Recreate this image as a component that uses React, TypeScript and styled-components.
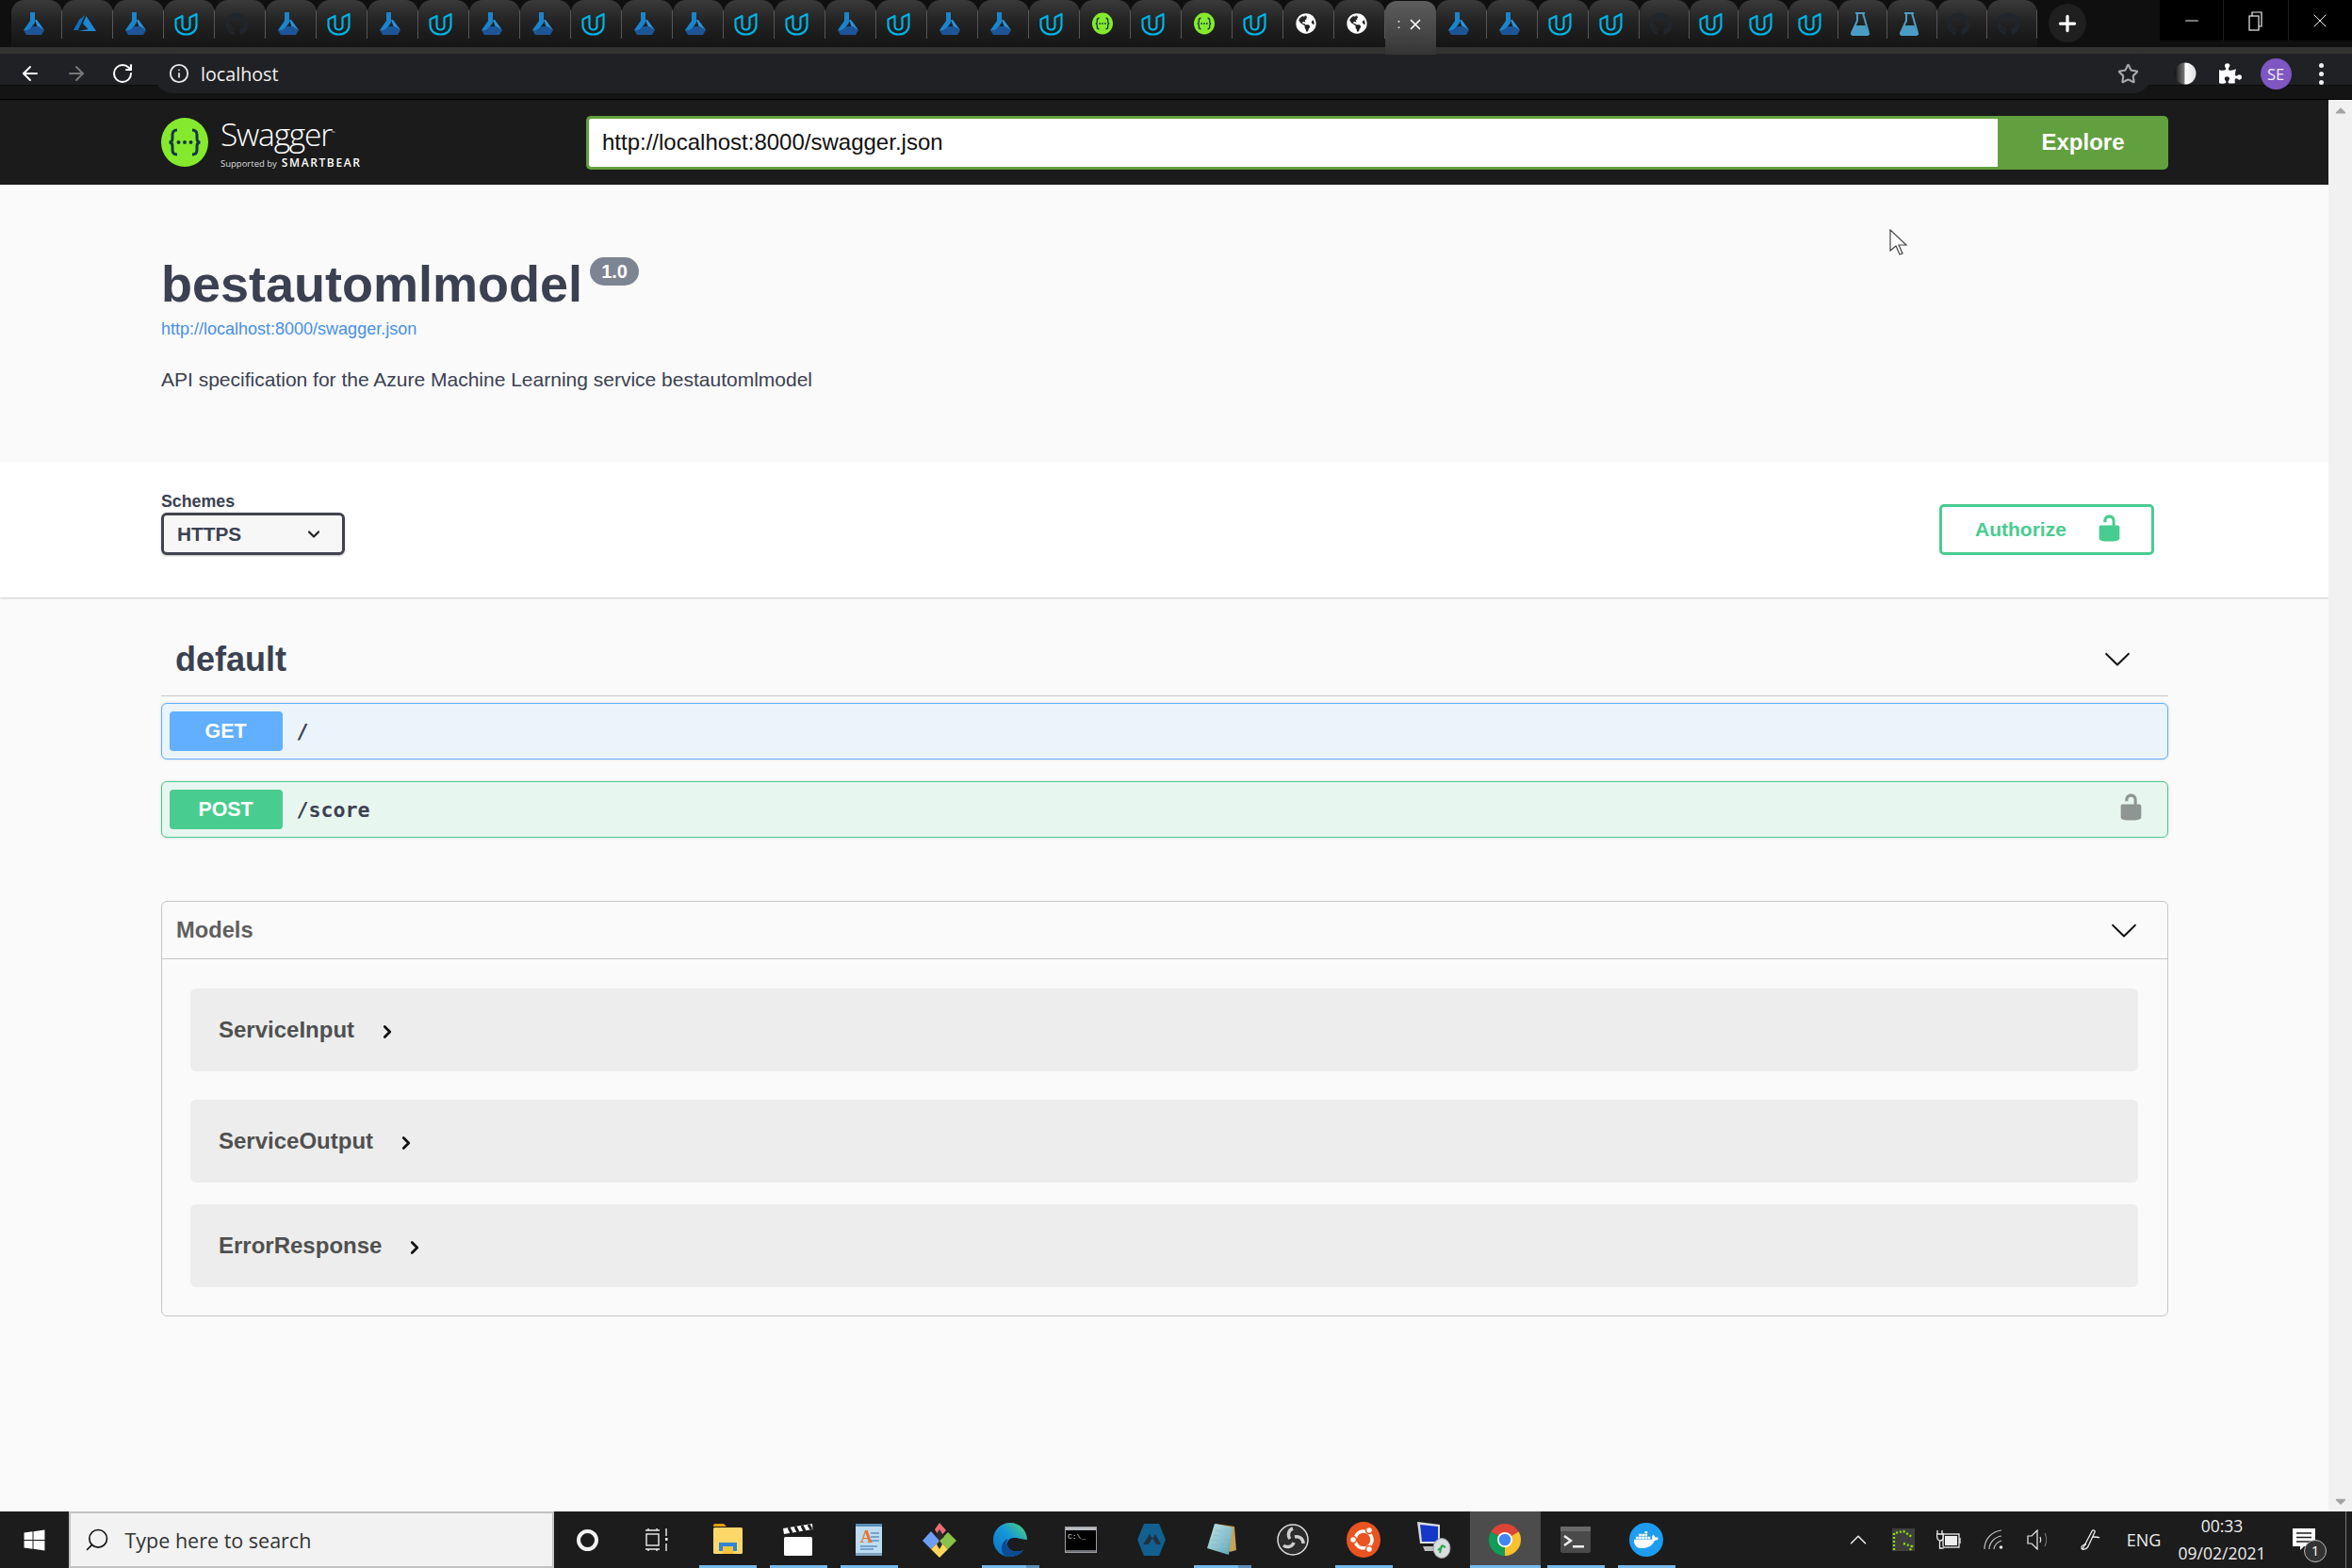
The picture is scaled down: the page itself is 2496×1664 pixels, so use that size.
import React from 'react';
import styled, { createGlobalStyle } from 'styled-components';
import { ArrowLeft, ArrowRight, RotateCw, Info, Star, Search, ChevronDown, ChevronRight, Plus, Minus, X, ChevronUp } from 'lucide-react';
import { FaGithub, FaGlobeAmericas, FaWindows, FaPuzzlePiece, FaDocker, FaCaretUp, FaCaretDown } from 'react-icons/fa';

const GlobalStyle = createGlobalStyle`
  html, body {
    margin: 0;
    padding: 0;
    overflow: hidden;
    background: #fafafa;
    font-family: "Liberation Sans", Arial, sans-serif;
  }
`;

const Screen = styled.div`
  position: relative;
  width: 2496px;
  height: 1664px;
  display: flex;
  flex-direction: column;
  overflow: hidden;
`;

/* ---- browser tabs ---- */
const TabStrip = styled.div`
  height: 50px;
  flex: none;
  display: flex;
  padding-left: 12px;
  background: #0f0f0f;
`;

const Tab = styled.div<{ $narrow?: boolean }>`
  position: relative;
  width: ${(p) => (p.$narrow ? '52.7px' : '54px')};
  flex: none;
  box-sizing: border-box;
  padding-right: 7px;
  display: flex;
  align-items: center;
  justify-content: center;
  border-radius: 14px 14px 0 0;
  background: linear-gradient(#3a3a3a, #232323 45%, #141414);
  &::after {
    content: '';
    position: absolute;
    right: 0;
    top: 11px;
    bottom: 9px;
    width: 1px;
    background: #565656;
  }
`;

const ActiveTab = styled.div`
  width: 54px;
  height: 57px;
  margin-top: 1px;
  flex: none;
  display: flex;
  align-items: flex-start;
  justify-content: center;
  gap: 7px;
  padding-top: 14px;
  box-sizing: border-box;
  border-radius: 12px 12px 0 0;
  background: linear-gradient(#5d5d5d, #3c3c3c 85%, #333);
  color: #fff;
  font-size: 14px;
  line-height: 20px;
  z-index: 1;
  svg {
    margin-top: 2px;
  }
`;

const NewTab = styled.div`
  width: 40px;
  height: 41px;
  margin: 4px 0 0 12px;
  flex: none;
  display: flex;
  align-items: center;
  justify-content: center;
  border-radius: 50%;
  background: #1f1f1f;
  color: #fff;
`;

const WindowControls = styled.div`
  margin-left: auto;
  width: 204px;
  height: 43px;
  display: flex;
  background: #000;
  color: #eee;
`;

const WindowButton = styled.div`
  flex: 1;
  display: flex;
  align-items: center;
  justify-content: center;
  & + & {
    border-left: 1px solid #1c1c1c;
  }
`;

const RestoreIcon = () => (
  <svg width="16" height="22" viewBox="0 0 16 22" fill="none" stroke="#eee" strokeWidth="1.2">
    <rect x="1" y="6" width="10" height="15" />
    <path d="M4 6V2h10v15h-3" />
  </svg>
);

const LabIcon = () => (
  <svg width="22" height="24" viewBox="0 0 22 24">
    <polygon points="7,0 12,0 12,11 4,22 0,19 7,9" fill="#1a84cc" />
    <polygon points="12,8 14,8 22,19 15,16" fill="#2c93dc" />
    <polygon points="10,15 16,15 22,19 19,24 3,24 0,19 4,19" fill="#1d5597" />
  </svg>
);

const AzureIcon = () => (
  <svg width="24" height="20" viewBox="0 0 24 20">
    <polygon points="12,1 6,6 0,17 5,17" fill="#0f6fbf" />
    <polygon points="13.5,2 10,10 15.5,16 5,18 24,18" fill="#1d86d6" />
  </svg>
);

const UdacityIcon = () => (
  <svg width="25" height="25" viewBox="0 0 25 25" fill="none" stroke="#02b3e4" strokeWidth="2.2" strokeLinejoin="round">
    <path d="M1.5 7.5 8.5 4v10.5c0 2.4 1.8 4 4 4 2.600 0 4-1.700 4-4V5.500L23.500 2v12c0 5.500-4.500 9.500-11 9.500s-11-4-11-9.500z" />
  </svg>
);

const FlaskIcon = () => (
  <svg width="22" height="25" viewBox="0 0 22 25">
    <path d="M6 1h10M8 1v8L2 22a1.500 1.500 0 0 0 1.500 2h15a1.500 1.500 0 0 0 1.500-2L14 1" fill="none" stroke="#4b9cc5" strokeWidth="2" />
    <path d="M5.500 14h11l4 10h-19z" fill="#4b9cc5" />
  </svg>
);

const SwaggerMark = ({ width, height }: { width: number; height: number }) => (
  <svg width={width} height={height} viewBox="0 0 50 52">
    <ellipse cx="25" cy="26" rx="25" ry="26" fill="#85ea2d" />
    <g fill="none" stroke="#173647" strokeWidth="3">
      <path d="M17 13c-4 0-5 2-5 5v4c0 2.500-1 4-3.500 4 2.500 0 3.500 1.500 3.500 4v4c0 3 1 5 5 5" />
      <path d="M33 13c4 0 5 2 5 5v4c0 2.500 1 4 3.500 4-2.500 0-3.500 1.500-3.500 4v4c0 3-1 5-5 5" />
    </g>
    <g fill="#173647">
      <circle cx="18.500" cy="26" r="2" />
      <circle cx="25" cy="26" r="2" />
      <circle cx="31.500" cy="26" r="2" />
    </g>
  </svg>
);

type TabKind = 'lab' | 'azure' | 'udacity' | 'github' | 'swagger' | 'globe' | 'flask';

const tabIcon = (kind: TabKind) => {
  switch (kind) {
    case 'lab':
      return <LabIcon />;
    case 'azure':
      return <AzureIcon />;
    case 'udacity':
      return <UdacityIcon />;
    case 'github':
      return <FaGithub size={25} color="#20262c" />;
    case 'swagger':
      return <SwaggerMark width={22} height={24} />;
    case 'globe':
      return <FaGlobeAmericas size={22} color="#fff" />;
    default:
      return <FlaskIcon />;
  }
};

const tabsBefore: TabKind[] = [
  'lab', 'azure', 'lab', 'udacity', 'github', 'lab', 'udacity', 'lab', 'udacity', 'lab', 'lab', 'udacity', 'lab', 'lab',
  'udacity', 'udacity', 'lab', 'udacity', 'lab', 'lab', 'udacity', 'swagger', 'udacity', 'swagger', 'udacity', 'globe', 'globe',
];
const tabsAfter: TabKind[] = ['lab', 'lab', 'udacity', 'udacity'];
const tabsNarrow: TabKind[] = ['github', 'udacity', 'udacity', 'udacity', 'flask', 'flask', 'github', 'github'];

/* ---- browser toolbar ---- */
const Toolbar = styled.div`
  height: 56px;
  flex: none;
  box-sizing: border-box;
  display: flex;
  border-bottom: 1px solid #000;
  background: linear-gradient(#323232 0 7px, #202124 7px 40px, #0c0c0c 40px 41px, #141414 41px);
  color: #fff;
`;

const NavGroup = styled.div`
  width: 163px;
  height: 42px;
  margin-top: 7px;
  flex: none;
  box-sizing: border-box;
  padding-left: 20px;
  display: flex;
  align-items: center;
  gap: 25px;
`;

const AddressBar = styled.div`
  width: 2121px;
  height: 42px;
  margin-top: 7px;
  flex: none;
  box-sizing: border-box;
  padding: 0 14px 0 16px;
  display: flex;
  align-items: center;
  border-radius: 21px;
  background: #202124;
`;

const AddressText = styled.span`
  margin-left: 12px;
  flex: 1;
  font-family: "Open Sans", sans-serif;
  font-size: 19.7px;
  color: #f2f2f2;
`;

const ExtensionGroup = styled.div`
  height: 42px;
  margin-top: 7px;
  padding-left: 11px;
  display: flex;
`;

const ExtensionSlot = styled.div`
  width: 48px;
  display: flex;
  align-items: center;
  justify-content: center;
`;

const Avatar = styled.div`
  width: 33px;
  height: 33px;
  border-radius: 50%;
  background: #7e57c2;
  color: #f4eefc;
  font-family: "Open Sans", sans-serif;
  font-size: 16.5px;
  line-height: 33px;
  text-align: center;
`;

const MenuDots = styled.div`
  display: flex;
  flex-direction: column;
  gap: 4px;
  span {
    width: 5px;
    height: 5px;
    border-radius: 50%;
    background: #eee;
  }
`;

const ContrastIcon = () => (
  <svg width="24" height="24" viewBox="0 0 24 24">
    <defs>
      <linearGradient id="contrast">
        <stop offset="0" stopColor="#111" />
        <stop offset="0.45" stopColor="#777" />
        <stop offset="0.5" stopColor="#fff" />
        <stop offset="1" stopColor="#ddd" />
      </linearGradient>
    </defs>
    <circle cx="12" cy="12" r="11.500" fill="url(#contrast)" />
  </svg>
);

/* ---- page body ---- */
const Viewport = styled.div`
  flex: 1;
  min-height: 0;
  display: flex;
`;

const Page = styled.main`
  flex: 1;
  min-width: 0;
  background: #fafafa;
  color: #3b4151;
`;

const Scrollbar = styled.div`
  width: 25px;
  flex: none;
  display: flex;
  flex-direction: column;
  justify-content: space-between;
  align-items: center;
  padding: 2px 0;
  background: #f1f1f1;
  color: #a3a3a3;
`;

const SwaggerBar = styled.header`
  height: 90px;
  box-sizing: border-box;
  padding: 0 170px 0 171px;
  display: flex;
  align-items: center;
  background: #1b1b1b;
`;

const LogoGroup = styled.div`
  width: 451px;
  flex: none;
  display: flex;
  align-items: center;
  gap: 13px;
`;

const LogoText = styled.div`
  display: flex;
  flex-direction: column;
  color: #fff;
`;

const LogoName = styled.span`
  font-family: "Open Sans", sans-serif;
  font-weight: 300;
  font-size: 33.5px;
  line-height: 36px;
  letter-spacing: -1.2px;
  margin-top: 2px;
  sup {
    font-size: 5px;
    letter-spacing: 0;
  }
`;

const LogoSub = styled.span`
  display: flex;
  align-items: baseline;
  gap: 5px;
  margin-top: 5.5px;
  font-family: "Open Sans", sans-serif;
  font-size: 9.500px;
  line-height: 14px;
  color: #ddd;
  b {
    font-size: 12px;
    font-weight: 600;
    letter-spacing: 1.600px;
    color: #fff;
  }
`;

const UrlForm = styled.form`
  flex: 1;
  height: 57px;
  margin: 0;
  display: flex;
`;

const UrlInput = styled.div`
  flex: 1;
  box-sizing: border-box;
  padding-left: 14px;
  display: flex;
  align-items: center;
  border: 3px solid #62a03f;
  border-right: none;
  border-radius: 5px 0 0 5px;
  background: #fff;
  font-size: 24px;
  color: #111;
`;

const ExploreButton = styled.div`
  width: 181px;
  display: flex;
  align-items: center;
  justify-content: center;
  border-radius: 0 5px 5px 0;
  background: #62a03f;
  color: #fff;
  font-size: 24px;
  font-weight: 700;
`;

const InfoBlock = styled.section`
  height: 294px;
  box-sizing: border-box;
  padding: 76px 171px 0;
`;

const TitleRow = styled.div`
  display: flex;
  align-items: flex-start;
  gap: 8px;
`;

const Title = styled.h1`
  margin: -1px 0 1px;
  font-size: 54px;
  line-height: 60px;
  font-weight: 700;
`;

const VersionBadge = styled.span`
  width: 52px;
  height: 30px;
  margin-top: 1px;
  border-radius: 15px;
  background: #7d8492;
  color: #fff;
  font-size: 20px;
  font-weight: 700;
  line-height: 30px;
  text-align: center;
`;

const SpecLink = styled.a`
  display: block;
  margin-top: 6px;
  font-size: 18px;
  line-height: 22px;
  color: #4990e2;
`;

const Description = styled.p`
  margin: 30px 0 0;
  font-size: 21px;
  line-height: 26px;
`;

const SchemeBar = styled.section`
  height: 144px;
  box-sizing: border-box;
  padding: 32px 185px 45px 171px;
  display: flex;
  align-items: flex-end;
  justify-content: space-between;
  background: #fff;
  box-shadow: 0 1px 2px rgba(0, 0, 0, 0.2);
`;

const SchemeLabel = styled.label`
  display: block;
  font-size: 17.800px;
  line-height: 20px;
  font-weight: 700;
`;

const SchemeSelect = styled.div`
  width: 195px;
  height: 45px;
  margin-top: 2px;
  box-sizing: border-box;
  padding: 0 20px 0 14px;
  display: flex;
  align-items: center;
  justify-content: space-between;
  border: 3px solid #41444e;
  border-radius: 6px;
  background: #f7f7f7;
  box-shadow: 0 1px 2px rgba(0, 0, 0, 0.25);
  font-size: 20.800px;
  font-weight: 700;
`;

const AuthorizeButton = styled.div`
  width: 228px;
  height: 54px;
  box-sizing: border-box;
  padding: 0 29px 0 35px;
  display: flex;
  align-items: center;
  justify-content: space-between;
  border: 3px solid #49cc90;
  border-radius: 5px;
  color: #49cc90;
  font-size: 21px;
  font-weight: 700;
  svg {
    margin-top: -3px;
  }
`;

const Wrapper = styled.div`
  margin: 26px 170px 0 171px;
`;

const SectionHeader = styled.div`
  height: 79px;
  box-sizing: border-box;
  padding: 0 39px 1px 15px;
  display: flex;
  align-items: center;
  justify-content: space-between;
  border-bottom: 1.500px solid #c6c7ca;
`;

const SectionTitle = styled.h2`
  margin: 2px 0 0;
  font-size: 36px;
  line-height: 40px;
  font-weight: 700;
`;

const Operation = styled.div<{ $border: string; $bg: string; $top: number }>`
  height: 60px;
  margin-top: ${(p) => p.$top}px;
  box-sizing: border-box;
  padding: 0 23px 0 7.500px;
  display: flex;
  align-items: center;
  border: 1.500px solid ${(p) => p.$border};
  border-radius: 6px;
  background: ${(p) => p.$bg};
  box-shadow: 0 0 3px rgba(0, 0, 0, 0.15);
  > svg {
    margin-top: -6px;
  }
`;

const MethodBadge = styled.span<{ $bg: string }>`
  width: 120px;
  height: 42px;
  flex: none;
  border-radius: 4px;
  background: ${(p) => p.$bg};
  color: #fff;
  font-size: 21.400px;
  font-weight: 700;
  line-height: 42px;
  text-align: center;
`;

const OperationPath = styled.span`
  margin-left: 15px;
  flex: 1;
  font-family: "DejaVu Sans Mono", monospace;
  font-size: 21.600px;
  font-weight: 700;
`;

const ModelsBox = styled.section`
  margin-top: 67px;
  border: 1.500px solid #c4c5c8;
  border-radius: 6px;
`;

const ModelsHeader = styled.div`
  height: 61px;
  box-sizing: border-box;
  padding: 0 31px 0 15px;
  display: flex;
  align-items: center;
  justify-content: space-between;
  border-bottom: 1.500px solid #c4c5c8;
  color: #5f5f5f;
  font-size: 23.700px;
  font-weight: 700;
`;

const ModelsList = styled.div`
  padding: 31px 31px 30px 30px;
`;

const ModelRow = styled.div<{ $gap: number }>`
  height: 88px;
  margin-top: ${(p) => p.$gap}px;
  box-sizing: border-box;
  padding-left: 30px;
  display: flex;
  align-items: center;
  gap: 24px;
  border-radius: 6px;
  background: #ededed;
  color: #505050;
  font-size: 24px;
  font-weight: 700;
  svg {
    margin-top: 4px;
  }
`;

const ArrowDown = ({ size }: { size: number }) => (
  <svg width={size} height={size} viewBox="0 0 20 20" fill="#111">
    <path d="M17.418 6.109c.272-.268.709-.268.979 0s.271.701 0 .969l-7.908 7.83c-.27.268-.707.268-.979 0l-7.908-7.83c-.27-.268-.27-.701 0-.969.271-.268.709-.268.979 0L10 13.250l7.418-7.141z" />
  </svg>
);

const UnlockedIcon = ({ color }: { color: string }) => (
  <svg width="31" height="31" viewBox="0 0 20 20" fill={color}>
    <path d="M15.800 8H14V5.600C14 2.703 12.665 1 10 1 7.334 1 6 2.703 6 5.600V6h2v-.801C8 3.754 8.797 3 10 3c1.203 0 2 .754 2 2.199V8H4c-.553 0-1 .646-1 1.199V17c0 .549.428 1.139.951 1.307l1.197.387C5.672 18.861 6.550 19 7.100 19h5.800c.549 0 1.428-.139 1.951-.307l1.196-.387c.524-.167.953-.757.953-1.306V9.199C17 8.646 16.352 8 15.800 8z" />
  </svg>
);

const MousePointer = styled.svg`
  position: absolute;
  left: 2005px;
  top: 243px;
`;

/* ---- windows taskbar ---- */
const Taskbar = styled.footer`
  height: 60px;
  flex: none;
  display: flex;
  background: #1c1c1c;
  color: #fff;
`;

const StartButton = styled.div`
  width: 72.500px;
  flex: none;
  display: flex;
  align-items: center;
  justify-content: center;
`;

const SearchBox = styled.div`
  width: 515px;
  flex: none;
  box-sizing: border-box;
  padding-left: 14px;
  display: flex;
  align-items: center;
  gap: 16px;
  border: 2px solid #c2c2c2;
  background: #f2f2f2;
  color: #333;
  font-family: "Open Sans", sans-serif;
  font-size: 21.500px;
  svg {
    transform: scaleX(-1);
  }
`;

const TaskSlot = styled.div<{ $w?: number; $bar?: number; $extra?: boolean; $active?: boolean }>`
  position: relative;
  width: ${(p) => p.$w ?? 75}px;
  flex: none;
  display: flex;
  align-items: center;
  justify-content: center;
  background: ${(p) => (p.$active ? '#4c4c4c' : 'transparent')};
  &::after {
    content: '';
    display: ${(p) => (p.$bar ? 'block' : 'none')};
    position: absolute;
    left: ${(p) => (p.$active ? 0 : 7)}px;
    bottom: 0;
    height: 3px;
    width: ${(p) => p.$bar ?? 0}px;
    background: ${(p) =>
      p.$extra
        ? 'linear-gradient(90deg, #76b9ed 0 77%, #5b8fb8 77%)'
        : '#76b9ed'};
  }
`;

const CortanaRing = styled.div`
  width: 23px;
  height: 23px;
  box-sizing: border-box;
  border: 4px solid #f2f2f2;
  border-radius: 50%;
`;

const DockerBadge = styled.div`
  width: 36px;
  height: 36px;
  display: flex;
  align-items: center;
  justify-content: center;
  border-radius: 50%;
  background: #1d9cf0;
  color: #fff;
`;

const TrayGroup = styled.div`
  margin-left: auto;
  display: flex;
`;

const TrayItem = styled.div<{ $w: number }>`
  position: relative;
  width: ${(p) => p.$w}px;
  display: flex;
  align-items: center;
  justify-content: center;
  font-family: "Open Sans", sans-serif;
  font-size: 18px;
  color: #eee;
`;

const Clock = styled.div`
  display: flex;
  flex-direction: column;
  align-items: center;
  gap: 8px;
  font-size: 17.500px;
  line-height: 21px;
`;

const NotifyBadge = styled.span`
  position: absolute;
  left: 27px;
  top: 30px;
  width: 24px;
  height: 24px;
  box-sizing: border-box;
  border: 1.500px solid #bbb;
  border-radius: 50%;
  background: #333;
  color: #fff;
  font-size: 15px;
  line-height: 21px;
  text-align: center;
`;

const DesktopEdge = styled.div`
  width: 24px;
  box-sizing: border-box;
  display: flex;
  justify-content: flex-end;
  padding-right: 6px;
  &::after {
    content: '';
    width: 1px;
    background: #777;
  }
`;

const TaskViewIcon = () => (
  <svg width="26" height="26" viewBox="0 0 26 26" fill="none" stroke="#eee" strokeWidth="1.400">
    <path d="M1 3h15M4 1v2M13 1v2M1 23h15M4 25v-2M13 25v-2" />
    <rect x="2" y="7" width="13" height="12" />
    <path d="M23 1v8M23 17v8" />
    <rect x="22" y="11" width="2.500" height="3" fill="#eee" stroke="none" />
  </svg>
);

const ExplorerIcon = () => (
  <svg width="33" height="36" viewBox="0 0 33 36">
    <path d="M1 3a2 2 0 0 1 2-2h9l3 3h-14z" fill="#e3a008" />
    <rect x="1" y="5" width="31" height="28" rx="1.500" fill="#fdd768" />
    <path d="M7 30V21h19v9h-4v-5H11v5z" fill="#2f86d6" />
    <rect x="11" y="25" width="11" height="8" fill="#f7c33d" />
  </svg>
);

const ClapperIcon = () => (
  <svg width="32" height="36" viewBox="0 0 32 36">
    <rect x="1" y="15" width="30" height="20" rx="1.500" fill="#fff" />
    <path d="M0 6 31 1l.5 6L1 12z" fill="#fff" />
    <path d="M6 5 9 11M13 4 16 10M20 3 23 9M27 2 30 7" stroke="#1c1c1c" strokeWidth="3" />
  </svg>
);

const WordPadIcon = () => (
  <svg width="32" height="36" viewBox="0 0 32 36">
    <rect x="2" y="1" width="28" height="34" rx="2" fill="#bcdcf2" />
    <rect x="2" y="1" width="28" height="3" fill="#5c8fb8" />
    <rect x="2" y="32" width="28" height="3" fill="#7fa3c0" />
    <text x="7" y="21" fontFamily="Liberation Serif" fontSize="18" fontWeight="700" fill="#e9762b">A</text>
    <path d="M18 11h9M18 15h9M18 19h9M7 25h18M7 28h14" stroke="#5f90bd" strokeWidth="1.300" />
  </svg>
);

const DiamondsIcon = () => (
  <svg width="36" height="38" viewBox="0 0 36 38">
    <polygon points="18,1 25,9 18,17 13,8" fill="#ec6b74" />
    <polygon points="0,20 9,10 18,20 9,29" fill="#6d9ef4" />
    <polygon points="18,20 27,11 36,20 27,29" fill="#8ac24a" />
    <polygon points="9,29 18,20 27,29 18,38" fill="#fbd75b" />
    <path d="M18 8 14 14l4 6-3 4 3 5 3-5-3-4 5-4z" fill="#2a2a2a" />
  </svg>
);

const EdgeIcon = () => (
  <svg width="36" height="38" viewBox="0 0 36 38">
    <defs>
      <linearGradient id="edgeFill" x1="0" y1="1" x2="1" y2="0">
        <stop offset="0" stopColor="#0c6fc0" />
        <stop offset="0.55" stopColor="#1598d8" />
        <stop offset="1" stopColor="#55d86f" />
      </linearGradient>
    </defs>
    <path d="M18 1C8 1 0 9 0 19s8 18 17 18c7 0 12-3 15-7-6 3-15 2-17-5-1-5 3-8 7-8 4 0 6 1 14 2 0-10-8-18-18-18z" fill="url(#edgeFill)" />
    <path d="M15 25c2 7 11 8 17 5-3 4-8 7-15 7-6 0-9-5-8-11 1-4 3-7 7-8-2 2-2 4-1 7z" fill="#0b4b94" />
  </svg>
);

const CmdIcon = () => (
  <svg width="34" height="28" viewBox="0 0 34 28">
    <rect x="0.500" y="0.500" width="33" height="27" fill="#000" stroke="#9a9ea3" />
    <rect x="1" y="1" width="32" height="3" fill="#b9bcc0" />
    <rect x="1" y="25" width="32" height="2" fill="#6d7074" />
    <text x="3" y="13" fontFamily="Liberation Mono" fontSize="8" fill="#ddd">C:\_</text>
  </svg>
);

const HexIcon = () => (
  <svg width="30" height="36" viewBox="0 0 30 36">
    <polygon points="7,1 23,1 30,18 23,35 7,35 0,18" fill="#11608f" />
    <path d="M6 23 13 12l3 5 3-5 6 11h-5l-4-7-4 7z" fill="#22313f" />
  </svg>
);

const NotepadIcon = () => (
  <svg width="34" height="36" viewBox="0 0 34 36">
    <defs>
      <linearGradient id="padFill" x1="0" y1="0" x2="1" y2="1">
        <stop offset="0" stopColor="#c3e3ea" />
        <stop offset="1" stopColor="#5aa6b5" />
      </linearGradient>
    </defs>
    <polygon points="10,1 30,4 32,29 25,31" fill="#c7a257" />
    <polygon points="9,1 28,5 24,34 1,27" fill="url(#padFill)" />
    <path d="M10 8 26 11M8 13l17 3M6 18l17 3M5 23l17 3" stroke="#8cc2cf" strokeWidth="1" />
  </svg>
);

const ObsIcon = () => (
  <svg width="34" height="36" viewBox="0 0 34 36">
    <circle cx="17" cy="18" r="16" fill="#2c2c2c" stroke="#ddd" strokeWidth="1.500" />
    <g fill="none" stroke="#cfcfcf" strokeWidth="3.500">
      <path d="M14 17a7 7 0 0 1 3-11" />
      <path d="M19 15a7 7 0 0 1 9 7" />
      <path d="M18 21a7 7 0 0 1-11 3" />
    </g>
  </svg>
);

const UbuntuIcon = () => (
  <svg width="36" height="38" viewBox="0 0 36 38">
    <ellipse cx="18" cy="19" rx="18" ry="19" fill="#e95420" />
    <circle cx="18" cy="19" r="9" fill="none" stroke="#fff" strokeWidth="3.500" />
    <g fill="#fff" stroke="#e95420" strokeWidth="1.500">
      <circle cx="7" cy="19" r="3.500" />
      <circle cx="24" cy="9" r="3.500" />
      <circle cx="24" cy="29" r="3.500" />
    </g>
  </svg>
);

const RdpIcon = () => (
  <svg width="36" height="40" viewBox="0 0 36 40">
    <polygon points="0,1 24,4 24,24 3,24" fill="#d7dbe0" />
    <polygon points="3,4 22,6 22,22 5,22" fill="#1538c8" />
    <path d="M6 27h16l2 5H8z" fill="#bdbdbd" />
    <ellipse cx="26" cy="29" rx="9" ry="10.500" fill="#d9dde0" stroke="#999" />
    <path d="M22 31l4-3M26 26l4 2M24 34l2-8" stroke="#2aa84a" strokeWidth="2" fill="none" />
  </svg>
);

const ChromeIcon = () => (
  <svg width="36" height="38" viewBox="0 0 36 36">
    <path d="M3.300 9.500A17 17 0 0 1 32.700 9.500L18 18z" fill="#db4437" />
    <path d="M32.700 9.500A17 17 0 0 1 18 35V18z" fill="#fbc02d" />
    <path d="M18 35A17 17 0 0 1 3.300 9.500L18 18z" fill="#0f9d58" />
    <circle cx="18" cy="18" r="8" fill="#fff" />
    <circle cx="18" cy="18" r="6.300" fill="#4285f4" />
  </svg>
);

const TerminalIcon = () => (
  <svg width="32" height="28" viewBox="0 0 32 28">
    <rect width="32" height="28" rx="2.500" fill="#4a4a4a" />
    <rect width="32" height="5" fill="#6a6a6a" />
    <path d="M4 10l7 5-7 5" fill="none" stroke="#eee" strokeWidth="2.500" />
    <rect x="13" y="20" width="12" height="2.500" fill="#eee" />
  </svg>
);

const BatteryIcon = () => (
  <svg width="26" height="22" viewBox="0 0 26 22" fill="none" stroke="#eee" strokeWidth="1.300">
    <rect x="7" y="5" width="17" height="14" />
    <rect x="9" y="7" width="13" height="10" fill="#eee" stroke="none" />
    <path d="M25 9v6" />
    <path d="M1 1v4M6 1v4M0 5h7v4a3 3 0 0 1-3 3 3 3 0 0 1-3-3zM3.500 12v8h4" fill="#1c1c1c" />
  </svg>
);

const WifiIcon = () => (
  <svg width="24" height="22" viewBox="0 0 24 22" fill="none" stroke="#bbb" strokeWidth="1.200">
    <path d="M1 21C1 10 9 2 19 1" />
    <path d="M6 21c0-7 6-13 13-14" />
    <path d="M11 21c0-4 4-8 8-9" />
    <circle cx="18.500" cy="19" r="1.800" fill="#eee" stroke="none" />
  </svg>
);

const VolumeIcon = () => (
  <svg width="24" height="22" viewBox="0 0 24 22" fill="none" stroke="#eee" strokeWidth="1.200">
    <path d="M1 7h4l6-6v20l-6-6H1z" />
    <path d="M14 8c1 2 1 4 0 6" />
    <path d="M19 4c2 4 2 10 0 14" stroke="#777" />
  </svg>
);

const PenIcon = () => (
  <svg width="22" height="24" viewBox="0 0 22 24" fill="none" stroke="#eee" strokeWidth="1.300">
    <path d="M3 22 13 3c1-2 4-1 3 1L9 19c-1 3-8 5-7 1 0-2 3-3 5-3" />
    <path d="M14 9c3 0 6 0 7 1" />
  </svg>
);

const GreenTrayIcon = () => (
  <svg width="24" height="24" viewBox="0 0 24 24">
    <rect width="24" height="24" fill="#3e3e3e" />
    <g fill="none" stroke="#8fe000" strokeWidth="2.400" strokeDasharray="2 2">
      <path d="M2 23V5l10-2 9 6" />
      <path d="M12 16l9 3-2 4" />
    </g>
  </svg>
);

const NotifyIcon = () => (
  <svg width="24" height="24" viewBox="0 0 24 24">
    <path d="M0 0h24v19H12l-4 4v-4H0z" fill="#fff" />
    <path d="M4 5h16M4 9.500h16M4 14h16" stroke="#1c1c1c" strokeWidth="1.500" />
  </svg>
);

const App = () => {
  return (
    <Screen>
      <GlobalStyle />
      <TabStrip>
        {tabsBefore.map((kind, i) => (
          <Tab key={i}>{tabIcon(kind)}</Tab>
        ))}
        <ActiveTab>
          <span>:</span>
          <X size={18} strokeWidth={2.2} />
        </ActiveTab>
        {tabsAfter.map((kind, i) => (
          <Tab key={i}>{tabIcon(kind)}</Tab>
        ))}
        {tabsNarrow.map((kind, i) => (
          <Tab key={i} $narrow>
            {tabIcon(kind)}
          </Tab>
        ))}
        <NewTab>
          <Plus size={26} strokeWidth={3} />
        </NewTab>
        <WindowControls>
          <WindowButton>
            <Minus size={22} strokeWidth={1.2} />
          </WindowButton>
          <WindowButton>
            <RestoreIcon />
          </WindowButton>
          <WindowButton>
            <X size={24} strokeWidth={1} />
          </WindowButton>
        </WindowControls>
      </TabStrip>

      <Toolbar>
        <NavGroup>
          <ArrowLeft size={24} />
          <ArrowRight size={24} color="#777" />
          <RotateCw size={24} />
        </NavGroup>
        <AddressBar>
          <Info size={22} color="#e6e6e6" />
          <AddressText>localhost</AddressText>
          <Star size={23} color="#a8a8a8" strokeWidth={2.2} />
        </AddressBar>
        <ExtensionGroup>
          <ExtensionSlot>
            <ContrastIcon />
          </ExtensionSlot>
          <ExtensionSlot>
            <FaPuzzlePiece size={24} color="#fff" />
          </ExtensionSlot>
          <ExtensionSlot>
            <Avatar>SE</Avatar>
          </ExtensionSlot>
          <ExtensionSlot>
            <MenuDots>
              <span />
              <span />
              <span />
            </MenuDots>
          </ExtensionSlot>
        </ExtensionGroup>
      </Toolbar>

      <Viewport>
        <Page>
          <SwaggerBar>
            <LogoGroup>
              <SwaggerMark width={50} height={52} />
              <LogoText>
                <LogoName>
                  Swagger<sup>™</sup>
                </LogoName>
                <LogoSub>
                  Supported by <b>SMARTBEAR</b>
                </LogoSub>
              </LogoText>
            </LogoGroup>
            <UrlForm>
              <UrlInput>http://localhost:8000/swagger.json</UrlInput>
              <ExploreButton>Explore</ExploreButton>
            </UrlForm>
          </SwaggerBar>

          <InfoBlock>
            <TitleRow>
              <Title>bestautomlmodel</Title>
              <VersionBadge>1.0</VersionBadge>
            </TitleRow>
            <SpecLink>http://localhost:8000/swagger.json</SpecLink>
            <Description>API specification for the Azure Machine Learning service bestautomlmodel</Description>
          </InfoBlock>

          <SchemeBar>
            <div>
              <SchemeLabel>Schemes</SchemeLabel>
              <SchemeSelect>
                HTTPS
                <ChevronDown size={20} strokeWidth={2.6} color="#222" />
              </SchemeSelect>
            </div>
            <AuthorizeButton>
              Authorize
              <UnlockedIcon color="#49cc90" />
            </AuthorizeButton>
          </SchemeBar>

          <Wrapper>
            <SectionHeader>
              <SectionTitle>default</SectionTitle>
              <ArrowDown size={30} />
            </SectionHeader>
            <Operation $border="#61affe" $bg="#ebf3fb" $top={7}>
              <MethodBadge $bg="#61affe">GET</MethodBadge>
              <OperationPath>/</OperationPath>
            </Operation>
            <Operation $border="#49cc90" $bg="#e8f6f0" $top={23}>
              <MethodBadge $bg="#49cc90">POST</MethodBadge>
              <OperationPath>/score</OperationPath>
              <UnlockedIcon color="#8e9694" />
            </Operation>

            <ModelsBox>
              <ModelsHeader>
                Models
                <ArrowDown size={30} />
              </ModelsHeader>
              <ModelsList>
                <ModelRow $gap={0}>
                  ServiceInput
                  <ChevronRight size={22} strokeWidth={3} color="#111" />
                </ModelRow>
                <ModelRow $gap={30}>
                  ServiceOutput
                  <ChevronRight size={22} strokeWidth={3} color="#111" />
                </ModelRow>
                <ModelRow $gap={23}>
                  ErrorResponse
                  <ChevronRight size={22} strokeWidth={3} color="#111" />
                </ModelRow>
              </ModelsList>
            </ModelsBox>
          </Wrapper>
        </Page>
        <Scrollbar>
          <FaCaretUp size={18} />
          <FaCaretDown size={18} />
        </Scrollbar>
      </Viewport>

      <Taskbar>
        <StartButton>
          <FaWindows size={25} color="#fff" />
        </StartButton>
        <SearchBox>
          <Search size={28} strokeWidth={1.4} color="#111" />
          Type here to search
        </SearchBox>
        <TaskSlot $w={72}>
          <CortanaRing />
        </TaskSlot>
        <TaskSlot>
          <TaskViewIcon />
        </TaskSlot>
        <TaskSlot $bar={61}>
          <ExplorerIcon />
        </TaskSlot>
        <TaskSlot $bar={61}>
          <ClapperIcon />
        </TaskSlot>
        <TaskSlot $bar={61}>
          <WordPadIcon />
        </TaskSlot>
        <TaskSlot>
          <DiamondsIcon />
        </TaskSlot>
        <TaskSlot $bar={61} $extra>
          <EdgeIcon />
        </TaskSlot>
        <TaskSlot>
          <CmdIcon />
        </TaskSlot>
        <TaskSlot>
          <HexIcon />
        </TaskSlot>
        <TaskSlot $bar={61} $extra>
          <NotepadIcon />
        </TaskSlot>
        <TaskSlot>
          <ObsIcon />
        </TaskSlot>
        <TaskSlot $bar={61}>
          <UbuntuIcon />
        </TaskSlot>
        <TaskSlot>
          <RdpIcon />
        </TaskSlot>
        <TaskSlot $bar={75} $active>
          <ChromeIcon />
        </TaskSlot>
        <TaskSlot $bar={61}>
          <TerminalIcon />
        </TaskSlot>
        <TaskSlot $bar={61}>
          <DockerBadge>
            <FaDocker size={26} />
          </DockerBadge>
        </TaskSlot>
        <TrayGroup>
          <TrayItem $w={48}>
            <ChevronUp size={30} strokeWidth={1.2} />
          </TrayItem>
          <TrayItem $w={48}>
            <GreenTrayIcon />
          </TrayItem>
          <TrayItem $w={48}>
            <BatteryIcon />
          </TrayItem>
          <TrayItem $w={50}>
            <WifiIcon />
          </TrayItem>
          <TrayItem $w={42}>
            <VolumeIcon />
          </TrayItem>
          <TrayItem $w={68}>
            <PenIcon />
          </TrayItem>
          <TrayItem $w={46}>ENG</TrayItem>
          <TrayItem $w={120}>
            <Clock>
              <span>00:33</span>
              <span>09/02/2021</span>
            </Clock>
          </TrayItem>
          <TrayItem $w={54}>
            <NotifyIcon />
            <NotifyBadge>1</NotifyBadge>
          </TrayItem>
          <DesktopEdge />
        </TrayGroup>
      </Taskbar>

      <MousePointer width="20" height="28" viewBox="0 0 20 28">
        <path d="M1 1v22l6-5 4 9 3-1-4-9h8z" fill="#fff" stroke="#444" strokeWidth="1.200" />
      </MousePointer>
    </Screen>
  );
};

export default App;
